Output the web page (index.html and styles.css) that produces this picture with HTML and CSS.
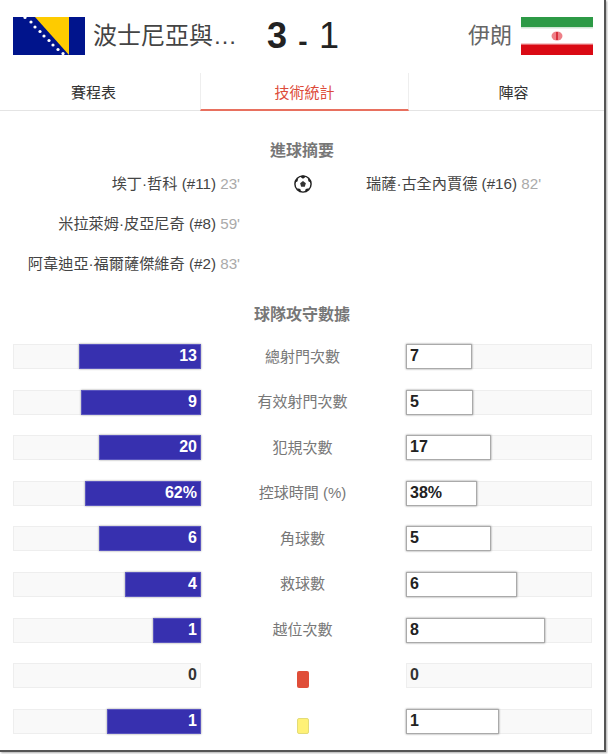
FILE: index.html
```html
<!DOCTYPE html>
<html lang="zh-Hant">
<head>
<meta charset="utf-8">
<title>波士尼亞與赫塞哥維納 3 - 1 伊朗</title>
<link rel="stylesheet" href="styles.css">
</head>
<body>
<div class="frame">
  <header class="score-head">
    <div class="team team-home">
      <svg class="flag" viewBox="0 0 72 38" width="72" height="38">
        <rect width="72" height="38" fill="#00148c"/>
        <polygon points="22,0 56,0 56,38" fill="#fecb00"/>
        <g fill="#fff">
          <circle cx="12" cy="0.5" r="1.6"/><circle cx="18" cy="5" r="1.6"/><circle cx="22" cy="10" r="1.6"/><circle cx="27" cy="14.5" r="1.6"/><circle cx="31" cy="19" r="1.6"/><circle cx="36" cy="23.5" r="1.6"/><circle cx="40" cy="28" r="1.6"/><circle cx="45" cy="32.5" r="1.6"/><circle cx="50" cy="36.5" r="1.6"/>
        </g>
      </svg>
      <span class="team-name">波士尼亞與…</span>
    </div>
    <div class="score"><b>3</b><span class="dash">-</span><span>1</span></div>
    <div class="team team-away">
      <span class="team-name">伊朗</span>
      <svg class="flag" viewBox="0 0 72 38" width="72" height="38">
        <rect width="72" height="11" fill="#2d9a46"/>
        <rect y="11" width="72" height="16" fill="#fff"/>
        <rect y="27" width="72" height="11" fill="#da0a14"/>
        <rect y="10" width="72" height="1.5" fill="#cfe6d4"/>
        <rect y="26" width="72" height="1.5" fill="#f6c8ca"/>
        <ellipse cx="36" cy="19" rx="5.5" ry="4.5" fill="#ee8088"/>
        <rect x="35" y="15" width="2" height="8" fill="#d8303c"/>
      </svg>
    </div>
  </header>

  <nav class="tabs">
    <div class="tab tab-first">賽程表</div>
    <div class="tab tab-active">技術統計</div>
    <div class="tab tab-last">陣容</div>
  </nav>

  <h2 class="section-title goals-title">進球摘要</h2>
  <section class="goals">
    <div class="goal-col goal-home">
      <div class="goal">埃丁·哲科 (#11) <span class="minute">23'</span></div>
      <div class="goal">米拉萊姆·皮亞尼奇 (#8) <span class="minute">59'</span></div>
      <div class="goal">阿韋迪亞·福爾薩傑維奇 (#2) <span class="minute">83'</span></div>
    </div>
    <div class="ball-col">
      <svg class="ball" viewBox="0 0 20 20" width="18" height="18">
        <circle cx="10" cy="10" r="9" fill="#fff" stroke="#222" stroke-width="1.6"/>
        <polygon points="10,6.8 13.2,9.2 12,13 8,13 6.8,9.2" fill="#333"/>
        <path d="M6 1.5 10 4.2 14 1.5 10 0.6ZM1 8.5 4 7 4.6 3.4 1.6 5.5ZM19 8.5 16 7 15.4 3.4 18.4 5.5ZM4.2 17 8 18.8 7 15.6 3.6 14.6ZM15.8 17 12 18.8 13 15.6 16.4 14.6Z" fill="#222"/>
      </svg>
    </div>
    <div class="goal-col goal-away">
      <div class="goal">瑞薩·古全內賈德 (#16) <span class="minute">82'</span></div>
    </div>
  </section>

  <h2 class="section-title stats-title">球隊攻守數據</h2>
  <section class="stats">
    <div class="stat"><div class="track track-home"><div class="fill fill-home" style="width:122px">13</div></div><div class="label">總射門次數</div><div class="track"><div class="fill fill-away" style="width:66px">7</div></div></div>
    <div class="stat"><div class="track track-home"><div class="fill fill-home" style="width:120px">9</div></div><div class="label">有效射門次數</div><div class="track"><div class="fill fill-away" style="width:67px">5</div></div></div>
    <div class="stat"><div class="track track-home"><div class="fill fill-home" style="width:102px">20</div></div><div class="label">犯規次數</div><div class="track"><div class="fill fill-away" style="width:85px">17</div></div></div>
    <div class="stat"><div class="track track-home"><div class="fill fill-home" style="width:116px">62%</div></div><div class="label">控球時間 (%)</div><div class="track"><div class="fill fill-away" style="width:71px">38%</div></div></div>
    <div class="stat"><div class="track track-home"><div class="fill fill-home" style="width:102px">6</div></div><div class="label">角球數</div><div class="track"><div class="fill fill-away" style="width:85px">5</div></div></div>
    <div class="stat"><div class="track track-home"><div class="fill fill-home" style="width:76px">4</div></div><div class="label">救球數</div><div class="track"><div class="fill fill-away" style="width:111px">6</div></div></div>
    <div class="stat"><div class="track track-home"><div class="fill fill-home" style="width:48px">1</div></div><div class="label">越位次數</div><div class="track"><div class="fill fill-away" style="width:139px">8</div></div></div>
    <div class="stat"><div class="track track-home"><div class="value-plain">0</div></div><div class="label"><span class="card card-red"></span></div><div class="track"><div class="value-plain">0</div></div></div>
    <div class="stat"><div class="track track-home"><div class="fill fill-home" style="width:94px">1</div></div><div class="label"><span class="card card-yellow"></span></div><div class="track"><div class="fill fill-away" style="width:93px">1</div></div></div>
  </section>
</div>
</body>
</html>
```

FILE: styles.css
```css
* { box-sizing: border-box; }
html, body { margin: 0; padding: 0; background: #fff; }
body {
  width: 608px;
  height: 754px;
  overflow: hidden;
  font-family: "Liberation Sans", "Noto Sans CJK TC", sans-serif;
  color: #333;
}
.frame {
  width: 606px;
  height: 752px;
  background: #fff;
  border-right: 2px solid #555;
  border-bottom: 2px solid #555;
  box-shadow: 1px 1px 2px #aaa;
  overflow: hidden;
}
.score-head {
  display: flex;
  align-items: center;
  height: 73px;
  padding: 17px 11px 18px 13px;
}
.team { display: flex; align-items: center; flex: 1 1 0; min-width: 0; }
.team-home { gap: 8px; }
.team-away { gap: 9px; justify-content: flex-end; }
.flag { display: block; flex: none; }
.team-name { font-size: 24px; color: #444; white-space: nowrap; line-height: 30px; }
.team-away .team-name { font-size: 22px; color: #666; }
.score {
  display: flex;
  align-items: center;
  justify-content: space-between;
  width: 72px;
  font-size: 36px;
  line-height: 38px;
  color: #222;
}
.score b { font-weight: 700; }
.dash { font-size: 28px; font-weight: 700; line-height: 26px; margin-top: 12px; }
.tabs {
  display: flex;
  height: 38px;
  border-bottom: 1px solid #e4e4e4;
}
.tab {
  font-size: 15px;
  line-height: 39px;
  text-align: center;
  color: #333;
}
.tab-first { width: 200px; padding-right: 13px; }
.tab-last { flex: 1; padding-left: 14px; }
.tab-active {
  width: 209px;
  color: #dd4b39;
  border-left: 1px solid #eee;
  border-right: 1px solid #eee;
  border-bottom: 2px solid #e8705f;
  height: 38px;
}
.section-title {
  margin: 0;
  font-size: 16px;
  font-weight: 700;
  text-align: center;
  color: #777;
  line-height: 20px;
}
.goals-title { margin-top: 30px; }
.goals {
  display: grid;
  grid-template-columns: 240px 126px 1fr;
  margin-top: 13px;
}
.goal {
  height: 40px;
  font-size: 15.2px;
  line-height: 20px;
  color: #444;
  white-space: nowrap;
}
.goal-home { text-align: right; }
.minute { color: #aaa; }
.ball-col { display: flex; justify-content: center; }
.ball { display: block; margin-top: 1px; }
.stats-title { margin-top: 11px; }
.stats {
  display: flex;
  flex-direction: column;
  gap: 20.6px;
  margin-top: 19px;
  padding-left: 13px;
}
.stat {
  display: grid;
  grid-template-columns: 188px 205px 186px;
  align-items: center;
  height: 25px;
}
.track {
  display: flex;
  height: 25px;
  background: #f9f9f9;
  border: 1px solid #eee;
}
.track-home { justify-content: flex-end; }
.fill {
  height: 25px;
  margin: -1px;
  padding: 0 3px;
  font-size: 16px;
  font-weight: 700;
  line-height: 22px;
  flex: none;
}
.fill-home {
  background: #3730af;
  border: 1px solid #5a55c0;
  color: #fff;
  text-align: right;
  box-shadow: 0 0 2px #999;
}
.fill-away {
  background: #fff;
  border: 1px solid #aaa;
  color: #222;
  text-align: left;
  box-shadow: 0 0 2px #888;
}
.value-plain {
  padding: 0 3px;
  font-size: 16px;
  font-weight: 700;
  line-height: 21px;
  color: #333;
}
.label {
  font-size: 15px;
  text-align: center;
  color: #777;
  line-height: 20px;
  padding-right: 2px;
}
.label:has(.card) { display: flex; justify-content: center; }
.card {
  display: block;
  width: 12px;
  border-radius: 2px;
}
.card-red { height: 17px; margin-top: 8px; background: #e04e39; }
.card-yellow { height: 16px; margin-top: 9px; background: #fff176; border: 1px solid #e3dc78; }
```
